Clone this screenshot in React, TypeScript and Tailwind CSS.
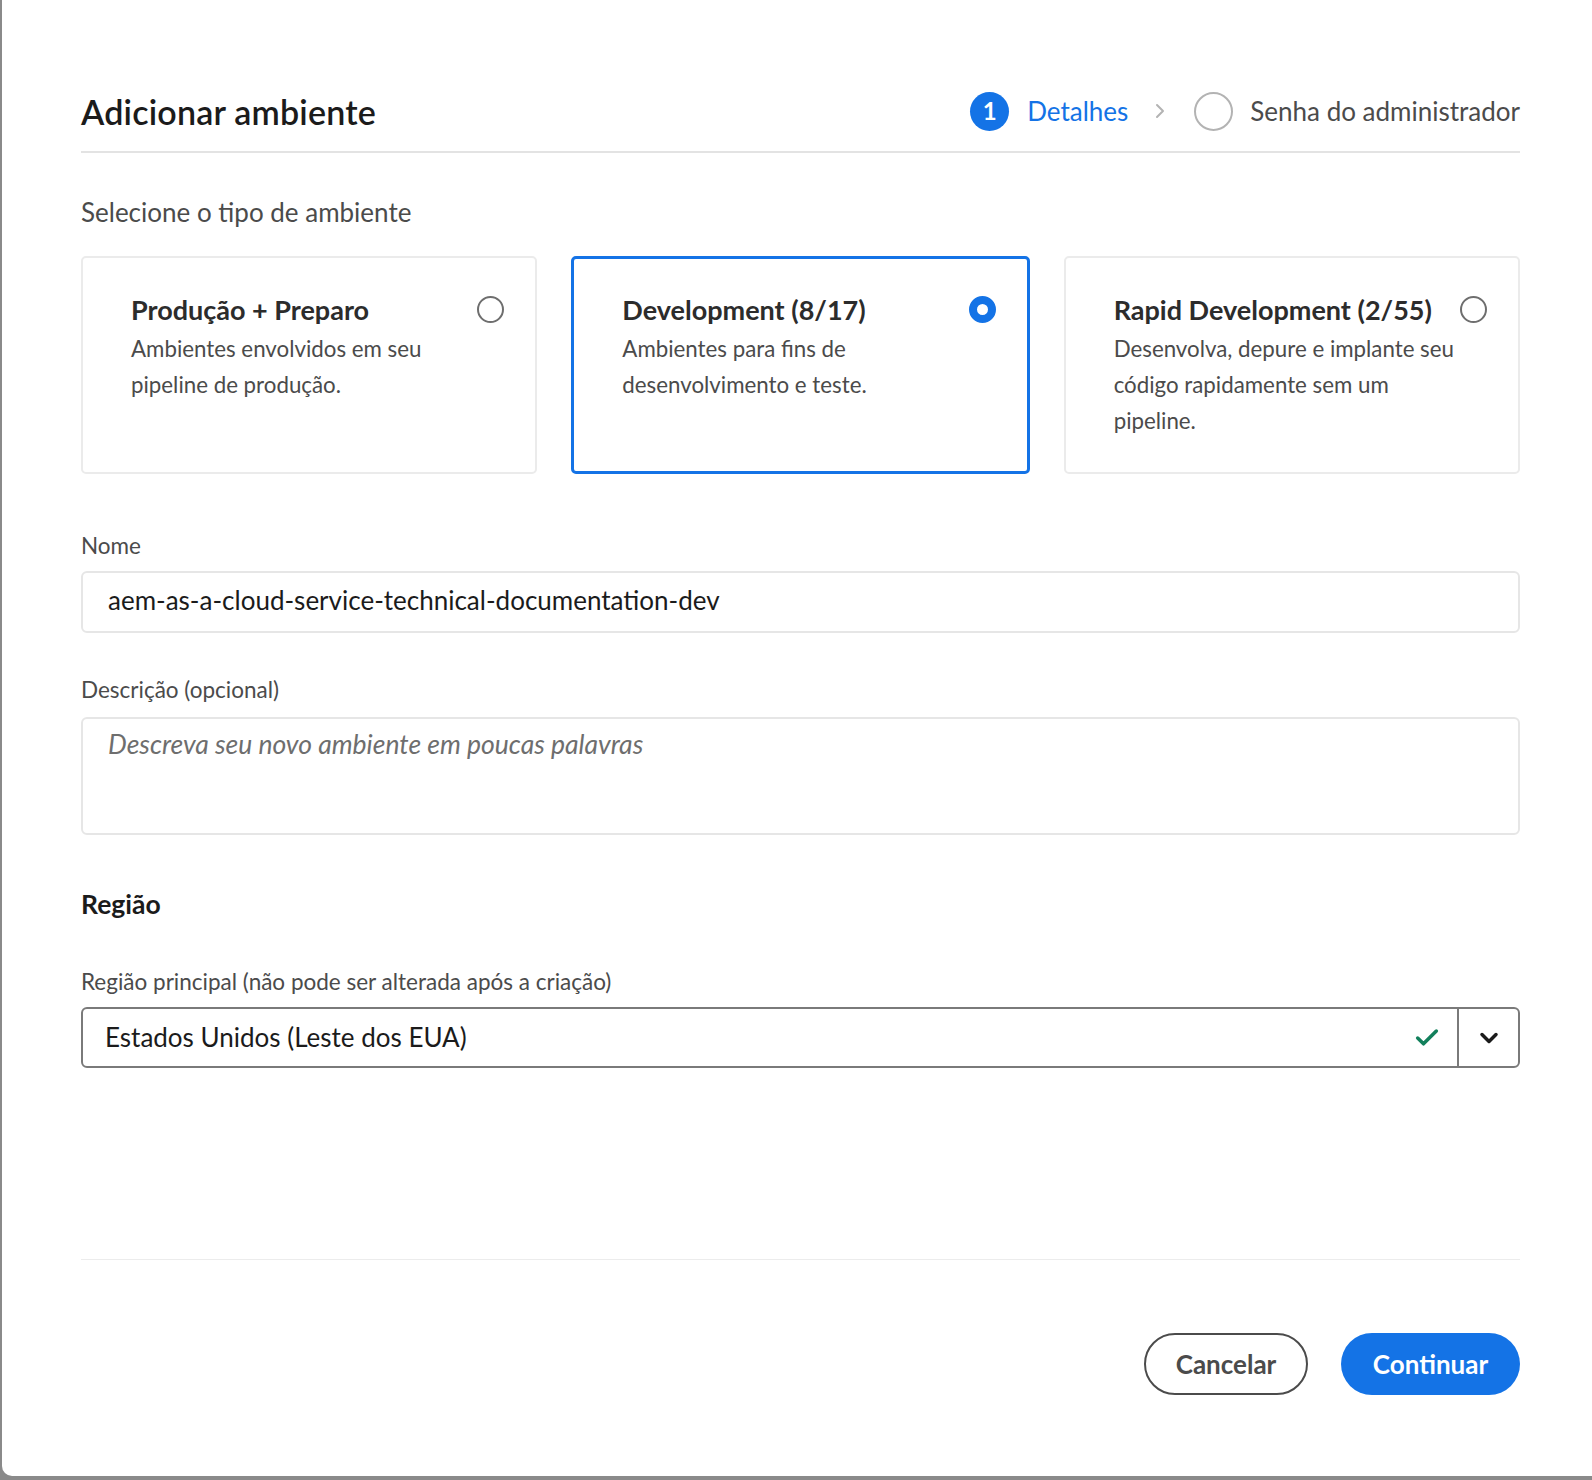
import { Check, ChevronDown, ChevronRight } from "lucide-react"

const FONT = "font-['Lato','Liberation_Sans',sans-serif]"

interface EnvCardProps {
    title: string;
    lines: string[];
    selected?: boolean;
}

const EnvCard = ({ title, lines, selected }: EnvCardProps) => {
    return (
        <div
            className={`${selected
                ? "border-[3px] border-[#1473e6] pt-[35px]"
                : "border-2 border-[#ebebeb] pt-[36px]"}
                flex-1 h-[218px] rounded-[5px] pl-[48px] pr-[31px]`}
        >
            <div className="flex items-start justify-between">
                <div className="flex flex-col">
                    <span className="text-[27px] leading-[32px] font-bold text-[#2c2c2c]">{title}</span>
                    <div className="mt-[5px] flex flex-col">
                        {lines.map((l) => (
                            <span key={l} className="text-[22.3px] leading-[36px] text-[#4b4b4b]">{l}</span>
                        ))}
                    </div>
                </div>
                {selected ? (
                    <span className="mt-[2px] w-[27px] h-[27px] rounded-full border-[8px] border-[#1473e6] bg-white shrink-0" />
                ) : (
                    <span className="mt-[2px] w-[27px] h-[27px] rounded-full border-2 border-[#6e6e6e] bg-white shrink-0" />
                )}
            </div>
        </div>
    )
}

export default function App() {
    return (
        <div className={`w-[1592px] h-[1480px] bg-[#8a8a8a] flex ${FONT}`}>
            <div className="flex-1 ml-[2px] mb-[4px] bg-white rounded-bl-[10px] pl-[79px] pr-[72px] flex flex-col">
                {/* header */}
                <div className="pt-[87px] pb-[16px] border-b-2 border-[#e3e3e3]">
                    <div className="h-[48px] flex items-center justify-between">
                        <h1 className="text-[34px] font-semibold text-[#1b1b1b] tracking-[0.2px]">Adicionar ambiente</h1>
                        <div className="flex items-center">
                            <span className="w-[39px] h-[39px] rounded-full bg-[#1473e6] text-white text-[24px] font-bold flex items-center justify-center">1</span>
                            <span className="ml-[18px] text-[26px] text-[#1473e6]">Detalhes</span>
                            <ChevronRight className="ml-[20px] w-[24px] h-[24px] text-[#b3b3b3]" strokeWidth={2} />
                            <span className="ml-[22px] w-[39px] h-[39px] rounded-full border-2 border-[#b3b3b3]" />
                            <span className="ml-[17px] text-[26px] text-[#4b4b4b]">Senha do administrador</span>
                        </div>
                    </div>
                </div>

                <p className="mt-[43px] text-[26px] leading-[32px] text-[#4b4b4b]">Selecione o tipo de ambiente</p>

                <div className="mt-[28px] flex gap-[34px]">
                    <EnvCard
                        title="Produção + Preparo"
                        lines={["Ambientes envolvidos em seu", "pipeline de produção."]}
                    />
                    <EnvCard
                        title="Development (8/17)"
                        lines={["Ambientes para fins de", "desenvolvimento e teste."]}
                        selected
                    />
                    <EnvCard
                        title="Rapid Development (2/55)"
                        lines={["Desenvolva, depure e implante seu", "código rapidamente sem um", "pipeline."]}
                    />
                </div>

                <label className="mt-[58px] text-[22.5px] leading-[28px] text-[#4b4b4b]">Nome</label>
                <div className="mt-[11px] h-[62px] rounded-[6px] border-2 border-[#e6e6e6] flex items-center pl-[25px] pb-[4px]">
                    <span className="text-[26px] text-[#1b1b1b]">aem-as-a-cloud-service-technical-documentation-dev</span>
                </div>

                <label className="mt-[43px] text-[22.5px] leading-[28px] text-[#4b4b4b]">Descrição (opcional)</label>
                <div className="mt-[13px] h-[118px] rounded-[6px] border-2 border-[#e6e6e6] pl-[25px] pt-[6px]">
                    <span className="text-[26.5px] italic text-[#6e6e6e]">Descreva seu novo ambiente em poucas palavras</span>
                </div>

                <h2 className="mt-[53px] text-[26.5px] leading-[32px] font-bold text-[#1b1b1b]">Região</h2>

                <label className="mt-[48px] text-[22.5px] leading-[28px] text-[#4b4b4b]">Região principal (não pode ser alterada após a criação)</label>
                <div className="mt-[11px] h-[61px] rounded-[6px] border-2 border-[#7a7a7a] flex">
                    <div className="flex-1 flex items-center pl-[22px] pr-[16px] justify-between">
                        <span className="text-[26px] text-[#1b1b1b]">Estados Unidos (Leste dos EUA)</span>
                        <Check className="w-[28px] h-[28px] text-[#12805c]" strokeWidth={3} />
                    </div>
                    <div className="w-[61px] border-l-2 border-[#7a7a7a] flex items-center justify-center">
                        <ChevronDown className="w-[28px] h-[28px] text-[#1b1b1b]" strokeWidth={3} />
                    </div>
                </div>

                <div className="mt-[191px] border-t border-[#ececec]" />

                <div className="mt-[73px] flex justify-end gap-[33px]">
                    <button className="w-[164px] h-[62px] rounded-full border-2 border-[#4b4b4b] text-[26px] font-bold text-[#4b4b4b]">
                        Cancelar
                    </button>
                    <button className="w-[179px] h-[62px] rounded-full bg-[#1473e6] text-[26px] font-bold text-white">
                        Continuar
                    </button>
                </div>
            </div>
        </div>
    )
}
